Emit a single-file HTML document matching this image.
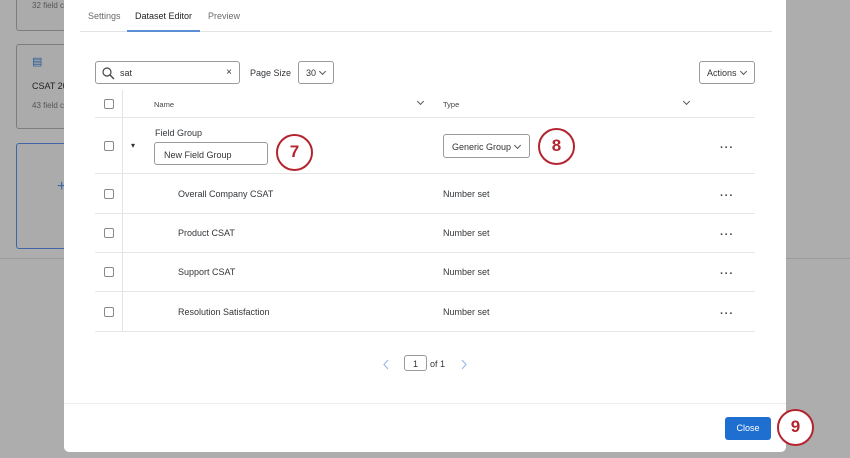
<!DOCTYPE html>
<html><head><style>
*{box-sizing:border-box;margin:0;padding:0}
body{width:850px;height:458px;background:#adadad;font-family:"Liberation Sans",sans-serif;position:relative;overflow:hidden;color:#32363a}
.card{position:absolute;border:1.5px solid #7d7d7d;border-radius:3px;background:#ababab;overflow:hidden;white-space:nowrap}
.modal{position:absolute;left:64px;top:-4px;width:722px;height:456px;background:#fff;border-radius:5px}
.abs{position:absolute;white-space:nowrap}
.t{font-size:9px}
.cb{position:absolute;width:10px;height:10px;border:1px solid #8a8a8a;border-radius:2px;left:104px;background:#fff}
.hl{position:absolute;left:95px;width:660px;height:1px;background:#e6e6e6}
.circ{position:absolute;width:37px;height:37px;border:2.5px solid #b3242f;border-radius:50%;color:#b3242f;font-size:17px;font-weight:bold;text-align:center;line-height:32px;background:#fff}
.dots{position:absolute;left:720px;font-size:11px;font-weight:bold;letter-spacing:1px;color:#444}
.btn{position:absolute;border:1px solid #9a9a9a;border-radius:3px;background:#fff;font-size:9px;color:#333}
.chev{display:inline-block;width:5px;height:5px;border-right:1px solid #555;border-bottom:1px solid #555;transform:rotate(45deg);margin-left:4px;position:relative;top:-2px}
</style></head><body>
<div class="card" style="left:16px;top:-10px;width:50px;height:41px"><span class="abs" style="left:15px;top:10px;font-size:8px;color:#555">32 field c</span></div>
<div class="card" style="left:16px;top:44px;width:50px;height:85px">
<span class="abs" style="left:15px;top:10px;color:#2a5a9a;font-size:11px">▤</span>
<span class="abs" style="left:15px;top:36px;font-size:9px;color:#222">CSAT 20</span>
<span class="abs" style="left:15px;top:56px;font-size:8px;color:#555">43 field c</span></div>
<div class="card" style="left:16px;top:143px;width:50px;height:106px;border-color:#3f64a8"><span class="abs" style="left:40px;top:34px;color:#3f64a8;font-size:16px">+</span></div>
<div class="abs" style="left:0;top:258px;width:850px;height:1px;background:#9c9c9c"></div>
<div class="modal"></div>
<span class="abs t" style="left:88px;top:11px;color:#6a6a6a">Settings</span>
<span class="abs t" style="left:135px;top:11px;color:#222">Dataset Editor</span>
<span class="abs t" style="left:208px;top:11px;color:#6a6a6a">Preview</span>
<div class="abs" style="left:80px;top:31px;width:692px;height:1px;background:#e3e3e3"></div>
<div class="abs" style="left:127px;top:30px;width:73px;height:2px;background:#5b8ed6"></div>
<div class="btn" style="left:95px;top:61px;width:145px;height:23px">
<svg class="abs" style="left:6px;top:5px" width="13" height="13" viewBox="0 0 13 13"><circle cx="5" cy="5" r="4" fill="none" stroke="#444" stroke-width="1.2"/><path d="M8 8l4 4" stroke="#444" stroke-width="1.3"/></svg>
<span class="abs" style="left:24px;top:6px">sat</span><span class="abs" style="right:7px;top:5px;font-size:10px">×</span></div>
<span class="abs t" style="left:250px;top:68px">Page Size</span>
<div class="btn" style="left:298px;top:61px;width:36px;height:23px"><span class="abs" style="left:7px;top:6px">30<span class="chev"></span></span></div>
<div class="btn" style="left:699px;top:61px;width:56px;height:23px"><span class="abs" style="left:7px;top:6px">Actions<span class="chev"></span></span></div>
<div class="abs" style="left:122px;top:90px;width:1px;height:242px;background:#e3e3e3"></div>
<div class="cb" style="top:99px"></div>
<span class="abs" style="left:154px;top:100px;font-size:7.5px;color:#444">Name</span>
<div class="abs" style="left:418px;top:99px;width:5px;height:5px;border-right:1px solid #555;border-bottom:1px solid #555;transform:rotate(45deg)"></div>
<span class="abs" style="left:443px;top:100px;font-size:7.5px;color:#444">Type</span>
<div class="abs" style="left:684px;top:99px;width:5px;height:5px;border-right:1px solid #555;border-bottom:1px solid #555;transform:rotate(45deg)"></div>
<div class="hl" style="top:117px"></div>
<div class="cb" style="top:141px"></div>
<span class="abs" style="left:131px;top:141px;font-size:8px;color:#333">▾</span>
<span class="abs t" style="left:155px;top:128px">Field Group</span>
<div class="btn" style="left:154px;top:142px;width:114px;height:23px"><span class="abs" style="left:9px;top:7px">New Field Group</span></div>
<div class="circ" style="left:276px;top:134px">7</div>
<div class="btn" style="left:443px;top:134px;width:87px;height:24px"><span class="abs" style="left:8px;top:7px">Generic Group<span class="chev"></span></span></div>
<div class="circ" style="left:538px;top:128px">8</div>
<span class="dots" style="top:142px">···</span>
<div class="hl" style="top:173px"></div>
<div class="cb" style="top:189px"></div><span class="abs t" style="left:178px;top:189px">Overall Company CSAT</span><span class="abs t" style="left:443px;top:189px">Number set</span><span class="dots" style="top:190px">···</span>
<div class="hl" style="top:213px"></div>
<div class="cb" style="top:228px"></div><span class="abs t" style="left:178px;top:228px">Product CSAT</span><span class="abs t" style="left:443px;top:228px">Number set</span><span class="dots" style="top:229px">···</span>
<div class="hl" style="top:252px"></div>
<div class="cb" style="top:267px"></div><span class="abs t" style="left:178px;top:267px">Support CSAT</span><span class="abs t" style="left:443px;top:267px">Number set</span><span class="dots" style="top:268px">···</span>
<div class="hl" style="top:291px"></div>
<div class="cb" style="top:307px"></div><span class="abs t" style="left:178px;top:307px">Resolution Satisfaction</span><span class="abs t" style="left:443px;top:307px">Number set</span><span class="dots" style="top:308px">···</span>
<div class="hl" style="top:331px"></div>
<svg class="abs" style="left:382px;top:359px" width="8" height="11"><path d="M6 1L2 5.5L6 10" fill="none" stroke="#9cbde6" stroke-width="1.2"/></svg>
<div class="btn" style="left:404px;top:355px;width:23px;height:16px"><span class="abs" style="left:8px;top:3px">1</span></div>
<span class="abs t" style="left:430px;top:359px">of 1</span>
<svg class="abs" style="left:460px;top:359px" width="8" height="11"><path d="M2 1L6 5.5L2 10" fill="none" stroke="#9cbde6" stroke-width="1.2"/></svg>
<div class="abs" style="left:64px;top:403px;width:722px;height:1px;background:#ececec"></div>
<div class="abs" style="left:725px;top:417px;width:46px;height:23px;background:#1f6fd0;border-radius:3px;color:#fff;font-size:9px;text-align:center;line-height:23px">Close</div>
<div class="circ" style="left:777px;top:409px">9</div>
</body></html>
